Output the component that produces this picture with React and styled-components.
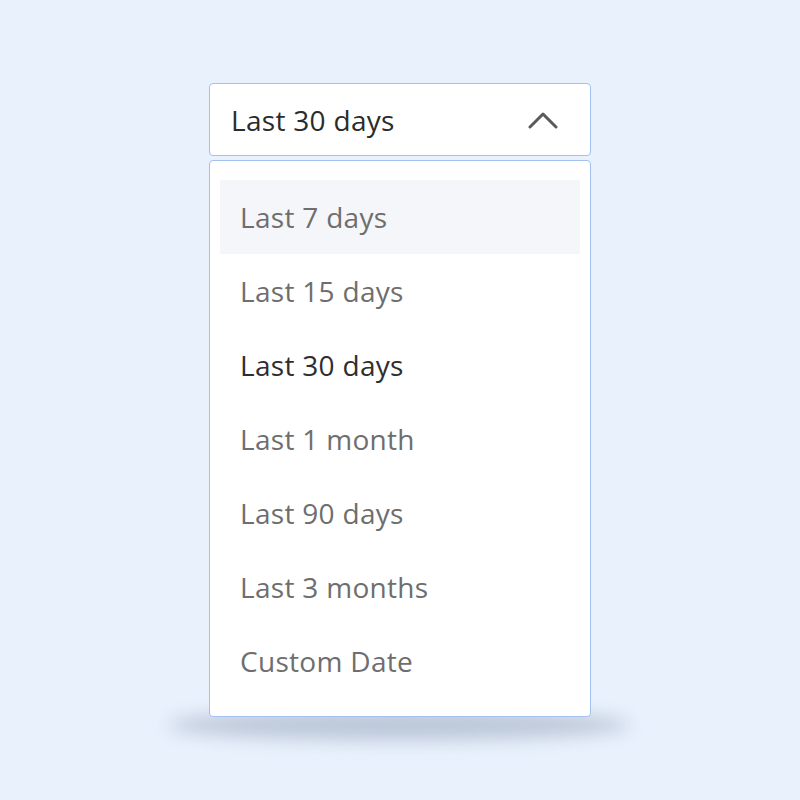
import React from 'react';
import styled, { createGlobalStyle } from 'styled-components';

const GlobalStyle = createGlobalStyle`
    html {
        background-color: #E9F1FD;
    }
    body {
        margin: 0;
        padding: 0;
        min-height: 800px;
        font-family: "Open Sans", "Noto Sans", sans-serif;
    }
`;

const Page = styled.div`
    display: flex;
    justify-content: center;
    padding-top: 83px;
    position: relative;
    isolation: isolate;
`;

const DropdownBox = styled.div`
    width: 382px;
    display: flex;
    flex-direction: column;
    gap: 4px;
`;

const Trigger = styled.button`
    height: 73px;
    display: flex;
    align-items: center;
    justify-content: space-between;
    padding: 0 32px 0 21px;
    background-color: #FFFFFF;
    border: 1.5px solid #A3C1EE;
    border-radius: 4px;
    font-family: inherit;
    font-size: 28px;
    letter-spacing: 0.3px;
    color: #2B2B2B;
    cursor: pointer;
`;

const Menu = styled.ul`
    position: relative;
    list-style: none;
    margin: 0;
    padding: 19px 10px 18px;
    background-color: #FFFFFF;
    border: 1.5px solid #A3C1EE;
    border-radius: 4px;

    &::after {
        content: '';
        position: absolute;
        left: -42px;
        right: -40px;
        bottom: -24px;
        height: 30px;
        border-radius: 50%;
        background-color: rgba(120, 135, 160, 0.4);
        filter: blur(9px);
        z-index: -1;
    }
`;

const MenuItem = styled.li`
    height: 74px;
    display: flex;
    align-items: center;
    padding-left: 20px;
    font-size: 28px;
    letter-spacing: 0.3px;
    color: ${({ $selected }) => ($selected ? '#2E2E2E' : '#6E6E6E')};
    background-color: ${({ $hover }) => ($hover ? '#F4F6F9' : 'transparent')};
`;

const Chevron = () => (
    <svg width="30" height="18" viewBox="0 0 30 18" fill="none">
        <path d="M2 16 L15 3 L28 16" stroke="#5A5A5A" strokeWidth="3" strokeLinecap="round" strokeLinejoin="round" />
    </svg>
);

const options = [
    'Last 7 days',
    'Last 15 days',
    'Last 30 days',
    'Last 1 month',
    'Last 90 days',
    'Last 3 months',
    'Custom Date',
];

export default function App() {
    const selected = 'Last 30 days';
    return (
        <>
            <GlobalStyle />
            <Page>
                <DropdownBox>
                    <Trigger>
                        {selected}
                        <Chevron />
                    </Trigger>
                    <Menu>
                        {options.map((opt, i) => (
                            <MenuItem key={opt} $hover={i === 0} $selected={opt === selected}>
                                {opt}
                            </MenuItem>
                        ))}
                    </Menu>
                </DropdownBox>
            </Page>
        </>
    );
}
